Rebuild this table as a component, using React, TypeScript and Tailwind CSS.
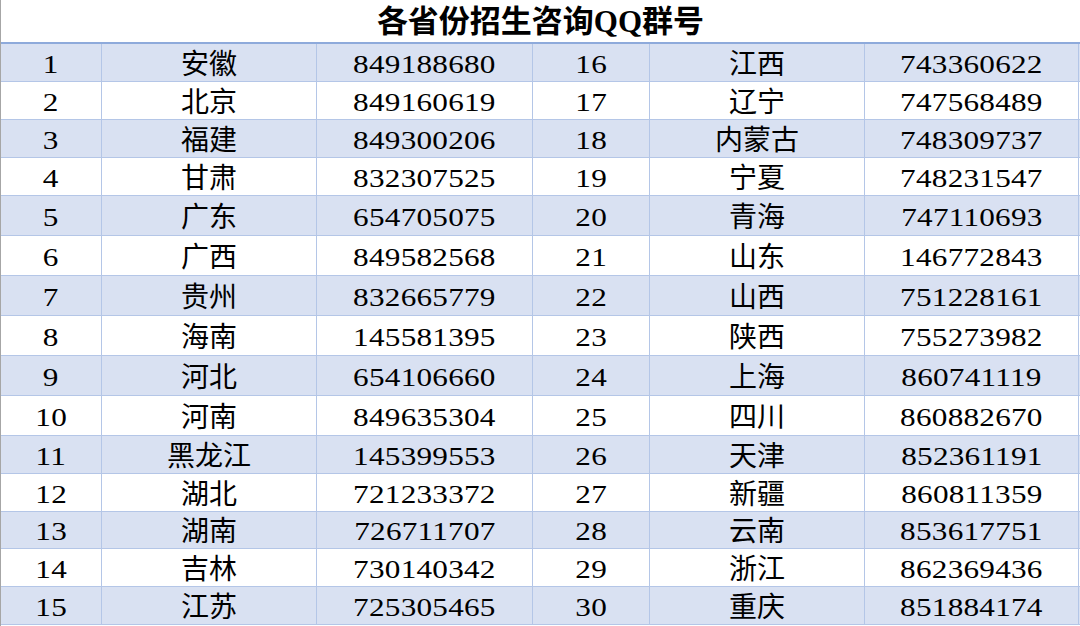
const rows: [number, string, string, number, string, string][] = [
  [1, "安徽", "849188680", 16, "江西", "743360622"],
  [2, "北京", "849160619", 17, "辽宁", "747568489"],
  [3, "福建", "849300206", 18, "内蒙古", "748309737"],
  [4, "甘肃", "832307525", 19, "宁夏", "748231547"],
  [5, "广东", "654705075", 20, "青海", "747110693"],
  [6, "广西", "849582568", 21, "山东", "146772843"],
  [7, "贵州", "832665779", 22, "山西", "751228161"],
  [8, "海南", "145581395", 23, "陕西", "755273982"],
  [9, "河北", "654106660", 24, "上海", "860741119"],
  [10, "河南", "849635304", 25, "四川", "860882670"],
  [11, "黑龙江", "145399553", 26, "天津", "852361191"],
  [12, "湖北", "721233372", 27, "新疆", "860811359"],
  [13, "湖南", "726711707", 28, "云南", "853617751"],
  [14, "吉林", "730140342", 29, "浙江", "862369436"],
  [15, "江苏", "725305465", 30, "重庆", "851884174"],
];

// row heights incl. bottom border, measured from the sheet
const heights = ["h-[38px]", "h-[38px]", "h-[38px]", "h-[38px]", "h-[40px]", "h-[40px]", "h-[40px]", "h-[40px]", "h-[40px]", "h-[40px]", "h-[38px]", "h-[38px]", "h-[37px]", "h-[38px]", "h-[38px]"];

const cell = "flex items-center justify-center border-r border-[#b4c6e7] overflow-hidden pt-[4px]";
const num = "inline-block text-[26px] leading-none tracking-[0.2px] scale-x-[1.2]";
const cjk = "text-[28px] leading-none";

export default function App() {
  return (
    <div
      className="w-[1080px] h-[626px] bg-white border-l border-[#a6a6a6] text-black overflow-hidden"
      style={{ fontFamily: '"Liberation Serif", "Noto Sans CJK SC", serif' }}
    >
      <div className="h-[44px] flex items-center justify-center border-b-2 border-[#8eaadb]">
        <h1 className="text-[31px] font-bold leading-none pt-[1px]">各省份招生咨询QQ群号</h1>
      </div>
      {rows.map((r, i) => (
        <div
          key={r[0]}
          className={`grid grid-cols-[101px_215px_216px_117px_215px_214px] border-b border-[#b4c6e7] ${heights[i]} ${i % 2 === 0 ? "bg-[#d9e1f2]" : "bg-white"}`}
        >
          <div className={cell}><span className={num}>{r[0]}</span></div>
          <div className={cell}><span className={cjk}>{r[1]}</span></div>
          <div className={cell}><span className={num}>{r[2]}</span></div>
          <div className={cell}><span className={num}>{r[3]}</span></div>
          <div className={cell}><span className={cjk}>{r[4]}</span></div>
          <div className={`${cell} border-[#8eaadb]`}><span className={num}>{r[5]}</span></div>
        </div>
      ))}
    </div>
  );
}
